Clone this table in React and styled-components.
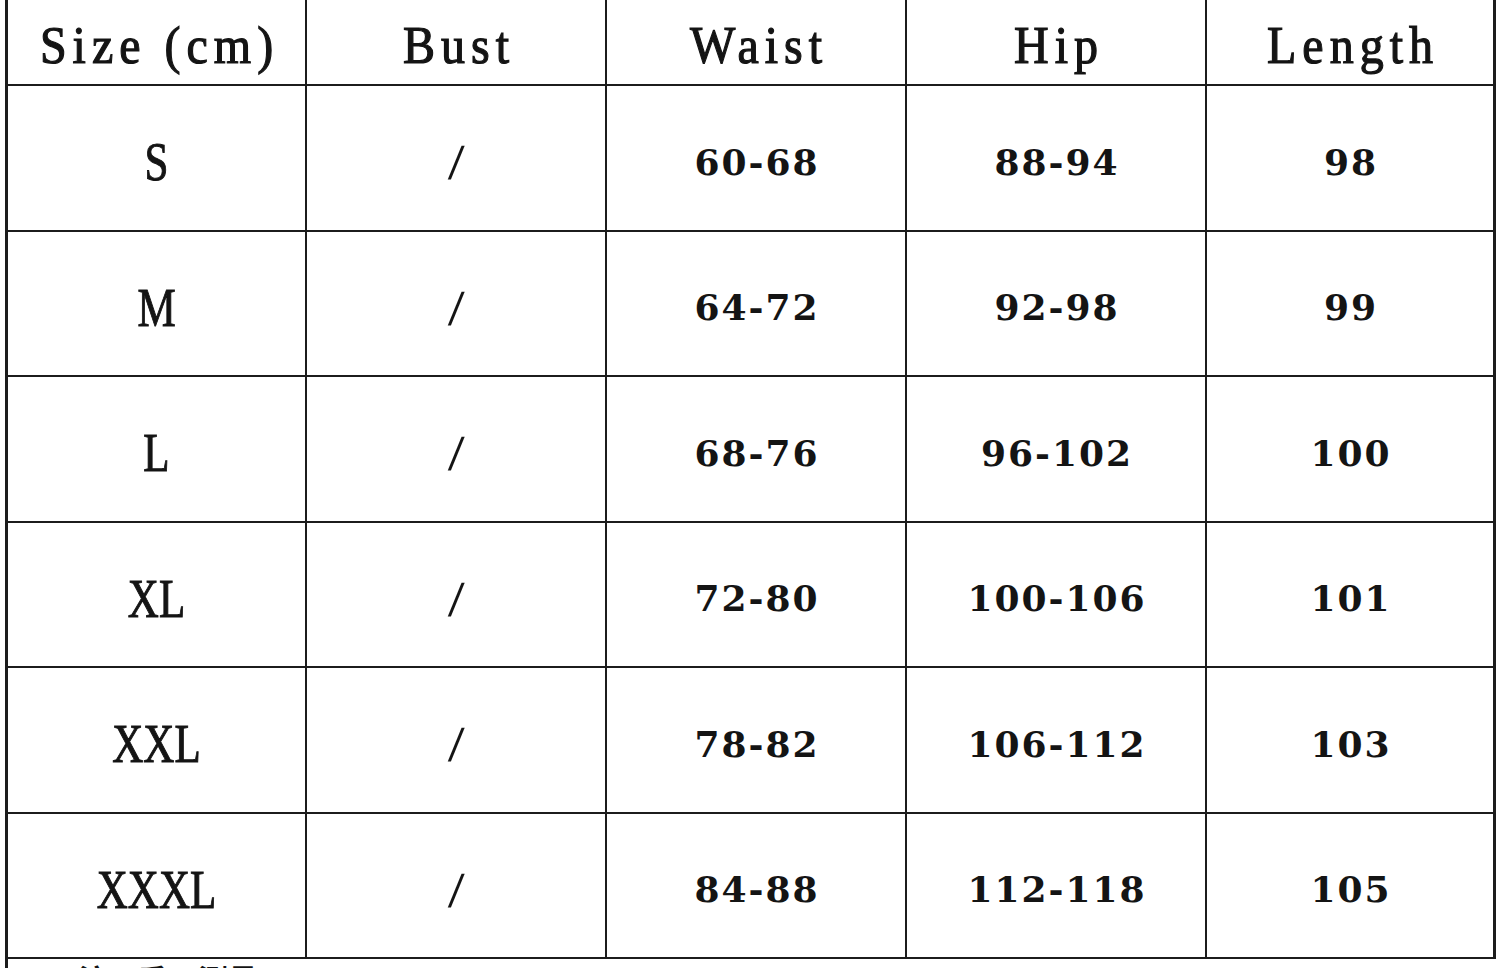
import React from 'react';
import styled, { createGlobalStyle } from 'styled-components';

const GlobalStyle = createGlobalStyle`
  html, body {
    margin: 0;
    padding: 0;
    background: #ffffff;
    height: 968px;
    overflow: hidden;
  }
`;

const headers = ['Size (cm)', 'Bust', 'Waist', 'Hip', 'Length'];

const rows = [
  ['S', '/', '60-68', '88-94', '98'],
  ['M', '/', '64-72', '92-98', '99'],
  ['L', '/', '68-76', '96-102', '100'],
  ['XL', '/', '72-80', '100-106', '101'],
  ['XXL', '/', '78-82', '106-112', '103'],
  ['XXXL', '/', '84-88', '112-118', '105'],
];

//Template
const App = () => (
  <Page>
    <GlobalStyle />
    <Chart>
      {headers.map((h, i) => (
        <HeadCell key={h} last={i === headers.length - 1}>
          <HeadText>{h}</HeadText>
        </HeadCell>
      ))}
      {rows.map((row) =>
        row.map((value, i) => (
          <Cell key={row[0] + i} last={i === row.length - 1}>
            {i === 0 && <SizeText>{value}</SizeText>}
            {i === 1 && <Slash>{value}</Slash>}
            {i > 1 && <NumText>{value}</NumText>}
          </Cell>
        ))
      )}
    </Chart>
    <Note>
      <NoteText>注：手工测量</NoteText>
    </Note>
  </Page>
);

//Style
const Page = styled.div`
  width: 1500px;
  height: 968px;
  padding-left: 5px;
  box-sizing: border-box;
  overflow: hidden;
`;

const Chart = styled.div`
  display: grid;
  grid-template-columns: 299px 300px 300px 300px 289px;
  grid-template-rows: 86px repeat(6, 145.5px);
  width: 1491px;
  border-left: 3px solid #1c1c1c;
  box-sizing: border-box;
`;

const HeadCell = styled.div`
  display: flex;
  align-items: center;
  justify-content: center;
  border-right: ${(p) => (p.last ? '3px' : '2px')} solid #1c1c1c;
  border-bottom: 2px solid #1c1c1c;
  padding-top: 4px;
  box-sizing: border-box;
`;

const Cell = styled(HeadCell)`
  padding-top: 8px;
`;

const HeadText = styled.span`
  font-family: 'Liberation Serif', 'DejaVu Serif', serif;
  font-size: 48px;
  color: #141414;
  white-space: pre;
  letter-spacing: 6px;
  margin-right: -6px;
  -webkit-text-stroke: 1.1px #141414;
  transform: scaleY(1.12);
`;

const SizeText = styled.span`
  font-family: 'Liberation Serif', 'DejaVu Serif', serif;
  font-size: 43px;
  color: #141414;
  -webkit-text-stroke: 0.8px #141414;
  transform: scaleY(1.28);
`;

const Slash = styled.span`
  font-family: 'Liberation Serif', 'DejaVu Serif', serif;
  font-weight: bold;
  font-size: 46px;
  color: #141414;
  transform: scaleY(1.1) skewX(-6deg);
`;

const NumText = styled.span`
  font-family: 'DejaVu Serif', 'Liberation Serif', serif;
  font-weight: bold;
  font-size: 36px;
  color: #141414;
  letter-spacing: 2px;
  margin-right: -2px;
`;

const Note = styled.div`
  border-left: 3px solid #1c1c1c;
  height: 40px;
  padding: 7px 0 0 70px;
  box-sizing: border-box;
`;

const NoteText = styled.span`
  font-family: 'Liberation Serif', 'Noto Sans CJK SC', serif;
  font-weight: bold;
  font-size: 30px;
  line-height: 1;
  color: #141414;
`;

export default App;
